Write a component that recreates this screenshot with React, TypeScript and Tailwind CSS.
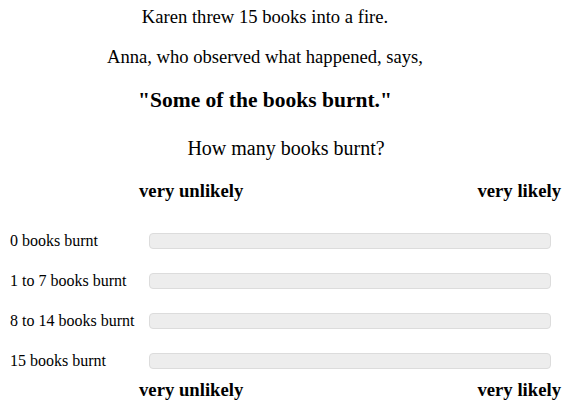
import React from 'react';

const options = ['0 books burnt', '1 to 7 books burnt', '8 to 14 books burnt', '15 books burnt'];

function ScaleEnds() {
  return (
    <div className="flex justify-between pl-[139px] pr-[3px] text-[18.7px] leading-[22px] font-bold">
      <span>very unlikely</span>
      <span>very likely</span>
    </div>
  );
}

export default function App() {
  return (
    <div className="relative w-[564px] h-[412px] overflow-hidden bg-white text-black font-['Liberation_Serif',serif]">
      <span className="absolute right-[6px] top-[-12px] text-[14px] leading-none">1</span>
      <div className="text-center text-[18.6px] leading-[20px] pr-[34px]">
        <p className="pt-[7px]">Karen threw 15 books into a fire.</p>
        <p className="pt-[20px]">Anna, who observed what happened, says,</p>
        <p className="pt-[20px] text-[21.5px] leading-[26px] font-bold">"Some of the books burnt."</p>
      </div>
      <p className="pt-[25px] pl-[8px] text-center text-[20px] leading-[20px]">How many books burnt?</p>
      <div className="pt-[22px]">
        <ScaleEnds />
      </div>
      <div className="flex flex-col gap-[24px] pt-[31px] pb-[10px]">
        {options.map((o) => (
          <div key={o} className="flex items-center h-[16px]">
            <div className="w-[149px] pl-[10px] text-[16px] whitespace-nowrap">{o}</div>
            <div className="w-[402px] h-[16px] rounded-[4px] border border-[#dcdcdc] bg-[#ededed]" />
          </div>
        ))}
      </div>
      <ScaleEnds />
    </div>
  );
}
